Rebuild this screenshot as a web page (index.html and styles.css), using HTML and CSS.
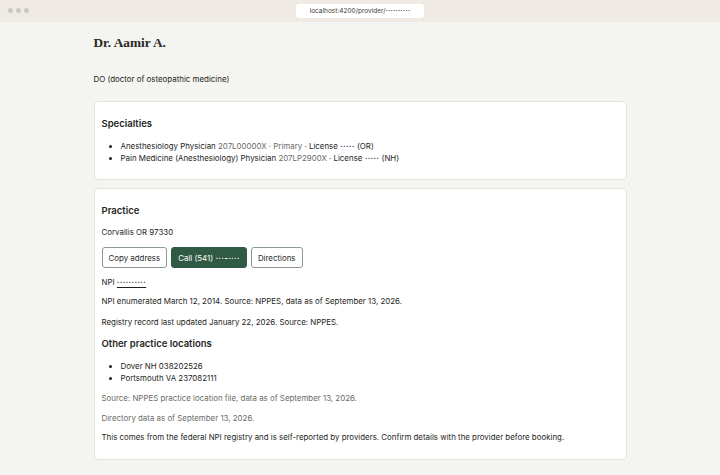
FILE: index.html
```html
<!DOCTYPE html>
<html lang="en">
<head>
<meta charset="utf-8">
<title>Dr. Aamir A.</title>
<link rel="stylesheet" href="styles.css">
</head>
<body>
<div class="chrome">
  <div class="dots"><span></span><span></span><span></span></div>
  <div class="url">localhost:4200/provider/<span class="mask">··········</span></div>
</div>
<main class="page">
  <h1 class="name">Dr. Aamir A.</h1>
  <p class="cred">DO (doctor of osteopathic medicine)</p>

  <section class="card spec">
    <h2 class="heading">Specialties</h2>
    <ul class="list">
      <li>Anesthesiology Physician <span class="muted">207L00000X · Primary</span> · License <span class="mask">·····</span> (OR)</li>
      <li>Pain Medicine (Anesthesiology) Physician <span class="muted">207LP2900X</span> · License <span class="mask">·····</span> (NH)</li>
    </ul>
  </section>

  <section class="card practice">
    <h2 class="heading">Practice</h2>
    <p class="line addr">Corvallis OR 97330</p>
    <div class="actions">
      <button class="btn">Copy address</button>
      <button class="btn primary">Call (541) <span class="mask">···-····</span></button>
      <button class="btn">Directions</button>
    </div>
    <p class="line npi">NPI <span class="npi-num mask">··········</span></p>
    <p class="line g7">NPI enumerated March 12, 2014. Source: NPPES, data as of September 13, 2026.</p>
    <p class="line g9">Registry record last updated January 22, 2026. Source: NPPES.</p>
    <h2 class="heading sub">Other practice locations</h2>
    <ul class="list locs">
      <li>Dover NH 038202526</li>
      <li>Portsmouth VA 237082111</li>
    </ul>
    <p class="line muted src">Source: NPPES practice location file, data as of September 13, 2026.</p>
    <p class="line muted g8">Directory data as of September 13, 2026.</p>
    <p class="line g7">This comes from the federal NPI registry and is self-reported by providers. Confirm details with the provider before booking.</p>
  </section>
</main>
</body>
</html>
```

FILE: styles.css
```css
* { box-sizing: border-box; }
html, body { margin: 0; padding: 0; }
body {
  background: #f4f4f0;
  font-family: "Inter", "Liberation Sans", sans-serif;
  font-size: 7.9px;
  color: #1e1e1c;
  height: 475px;
  overflow: hidden;
}
.chrome {
  height: 22px;
  background: #efebe4;
  display: flex;
  align-items: center;
  justify-content: center;
  position: relative;
}
.dots {
  position: absolute;
  left: 8px;
  top: 8px;
  display: flex;
  gap: 3px;
}
.dots span {
  width: 5px;
  height: 5px;
  border-radius: 50%;
  background: #cbc8c2;
}
.url {
  width: 128px;
  height: 14px;
  background: #fff;
  border-radius: 3px;
  font-size: 6.5px;
  color: #3b3b38;
  display: flex;
  align-items: center;
  justify-content: center;
}
.mask { letter-spacing: 0.3px; font-weight: 700; }
.page {
  width: 533px;
  margin: 0 auto;
}
.name {
  font-family: "Liberation Serif", serif;
  font-weight: 700;
  font-size: 13.3px;
  line-height: 16px;
  margin: 13px 0 0;
  color: #2a2a28;
}
.cred {
  margin: 22px 0 0;
  line-height: 12px;
}
.card {
  background: #fff;
  border: 1px solid #e4e3dd;
  border-radius: 4px;
  padding: 15px 7px 16px;
}
.spec { margin-top: 16px; padding-bottom: 15px; }
.practice { margin-top: 8px; }
.heading {
  font-size: 9.5px;
  font-weight: 600;
  line-height: 14px;
  margin: 0;
  color: #262624;
}
.heading.sub { margin-top: 9px; }
.list {
  margin: 9px 0 0;
  padding-left: 19px;
  line-height: 12px;
}
.line {
  margin: 8px 0 0;
  line-height: 12px;
}
.g7 { margin-top: 7px; }
.g8 { margin-top: 8px; }
.g9 { margin-top: 9px; }
.muted { color: #6b6b66; }
.actions {
  display: flex;
  gap: 4px;
  margin-top: 9px;
}
.btn {
  height: 21px;
  padding: 0 6px;
  font-family: inherit;
  font-size: 7.9px;
  color: #2a2a28;
  background: #fff;
  border: 1px solid #8a9a90;
  border-radius: 3px;
}
.btn.primary {
  background: #2f5a44;
  border-color: #2f5a44;
  color: #fff;
}
.npi-num {
  text-decoration: underline;
  text-decoration-thickness: 1px;
  text-underline-offset: 2px;
}
```
